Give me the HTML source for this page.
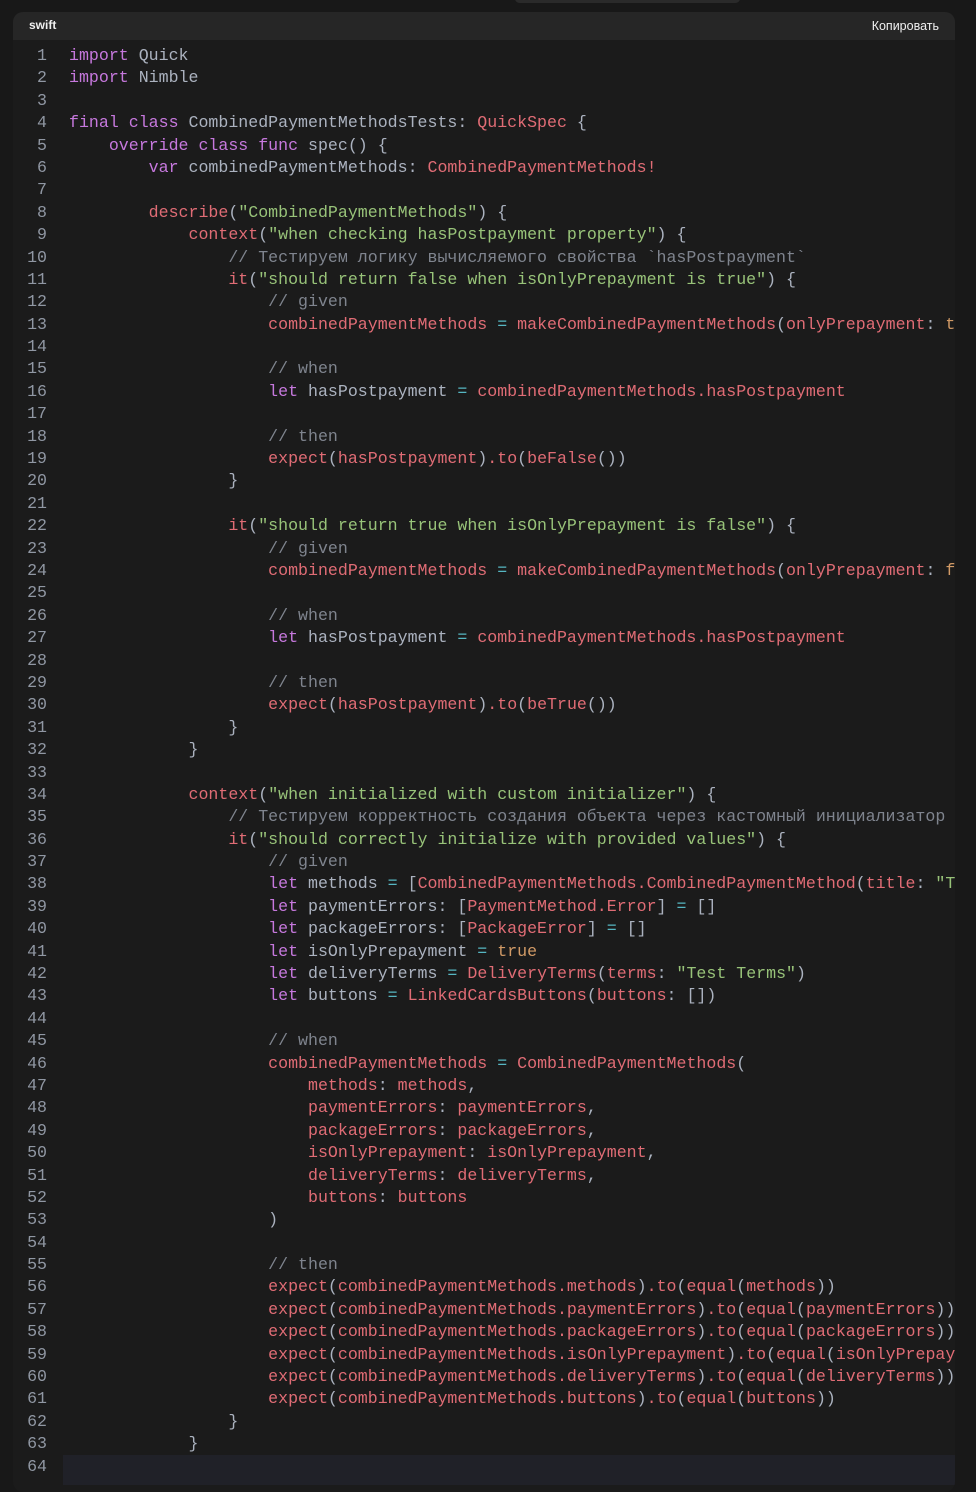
<!DOCTYPE html>
<html><head><meta charset="utf-8"><style>
html,body{margin:0;padding:0;background:#181818;width:976px;height:1472px;overflow:hidden}
.tab{position:absolute;left:515px;top:-6px;width:225px;height:9px;background:#2a2a2a;border-radius:5px}
.card{position:absolute;left:13px;top:12px;width:942px;height:1480px;background:#1b1b1b;border-radius:10px;overflow:hidden}
.hdr{height:28px;background:#262626;font-family:"Liberation Sans",sans-serif;font-size:12px;font-weight:bold;color:#f0f0f0;position:relative}
.hdr .hl1{position:absolute;left:16px;top:6px}
.hdr .hr1{position:absolute;right:16px;top:7px;font-weight:normal;font-size:12.5px;color:#f0f0f0}
pre{margin:0;position:absolute;top:33px;left:0;font-family:"Liberation Mono","DejaVu Sans Mono",monospace;font-size:16.6px;line-height:22.39px;color:#abb2bf;white-space:pre}
.ln{display:inline-block;width:34px;text-align:right;color:#9097a3;margin-right:22px}
.k{color:#c678dd}.r{color:#e06c75}.s{color:#98c379}.c{color:#7f848e}.o{color:#56b6c2}.n{color:#d19a66}
.hl{position:absolute;left:50px;top:1443px;width:900px;height:30px;background:#202128}
</style></head><body>
<div class="tab"></div>
<div class="card">
<div class="hdr"><span class="hl1">swift</span><span class="hr1">Копировать</span></div>
<div class="hl"></div>
<pre><span class="ln">1</span><span class="k">import</span> Quick
<span class="ln">2</span><span class="k">import</span> Nimble
<span class="ln">3</span>
<span class="ln">4</span><span class="k">final class</span> CombinedPaymentMethodsTests: <span class="r">QuickSpec</span> {
<span class="ln">5</span>    <span class="k">override class func</span> spec() {
<span class="ln">6</span>        <span class="k">var</span> combinedPaymentMethods: <span class="r">CombinedPaymentMethods!</span>
<span class="ln">7</span>
<span class="ln">8</span>        <span class="r">describe</span>(<span class="s">"CombinedPaymentMethods"</span>) {
<span class="ln">9</span>            <span class="r">context</span>(<span class="s">"when checking hasPostpayment property"</span>) {
<span class="ln">10</span>                <span class="c">// Тестируем логику вычисляемого свойства `hasPostpayment`</span>
<span class="ln">11</span>                <span class="r">it</span>(<span class="s">"should return false when isOnlyPrepayment is true"</span>) {
<span class="ln">12</span>                    <span class="c">// given</span>
<span class="ln">13</span>                    <span class="r">combinedPaymentMethods</span> <span class="o">=</span> <span class="r">makeCombinedPaymentMethods</span>(<span class="r">onlyPrepayment</span>: <span class="n">true</span>)
<span class="ln">14</span>
<span class="ln">15</span>                    <span class="c">// when</span>
<span class="ln">16</span>                    <span class="k">let</span> hasPostpayment <span class="o">=</span> <span class="r">combinedPaymentMethods.hasPostpayment</span>
<span class="ln">17</span>
<span class="ln">18</span>                    <span class="c">// then</span>
<span class="ln">19</span>                    <span class="r">expect</span>(<span class="r">hasPostpayment</span>)<span class="r">.to</span>(<span class="r">beFalse</span>())
<span class="ln">20</span>                }
<span class="ln">21</span>
<span class="ln">22</span>                <span class="r">it</span>(<span class="s">"should return true when isOnlyPrepayment is false"</span>) {
<span class="ln">23</span>                    <span class="c">// given</span>
<span class="ln">24</span>                    <span class="r">combinedPaymentMethods</span> <span class="o">=</span> <span class="r">makeCombinedPaymentMethods</span>(<span class="r">onlyPrepayment</span>: <span class="n">false</span>)
<span class="ln">25</span>
<span class="ln">26</span>                    <span class="c">// when</span>
<span class="ln">27</span>                    <span class="k">let</span> hasPostpayment <span class="o">=</span> <span class="r">combinedPaymentMethods.hasPostpayment</span>
<span class="ln">28</span>
<span class="ln">29</span>                    <span class="c">// then</span>
<span class="ln">30</span>                    <span class="r">expect</span>(<span class="r">hasPostpayment</span>)<span class="r">.to</span>(<span class="r">beTrue</span>())
<span class="ln">31</span>                }
<span class="ln">32</span>            }
<span class="ln">33</span>
<span class="ln">34</span>            <span class="r">context</span>(<span class="s">"when initialized with custom initializer"</span>) {
<span class="ln">35</span>                <span class="c">// Тестируем корректность создания объекта через кастомный инициализатор</span>
<span class="ln">36</span>                <span class="r">it</span>(<span class="s">"should correctly initialize with provided values"</span>) {
<span class="ln">37</span>                    <span class="c">// given</span>
<span class="ln">38</span>                    <span class="k">let</span> methods <span class="o">=</span> [<span class="r">CombinedPaymentMethods.CombinedPaymentMethod</span>(<span class="r">title</span>: <span class="s">"Test"</span>)]
<span class="ln">39</span>                    <span class="k">let</span> paymentErrors: [<span class="r">PaymentMethod.Error</span>] <span class="o">=</span> []
<span class="ln">40</span>                    <span class="k">let</span> packageErrors: [<span class="r">PackageError</span>] <span class="o">=</span> []
<span class="ln">41</span>                    <span class="k">let</span> isOnlyPrepayment <span class="o">=</span> <span class="n">true</span>
<span class="ln">42</span>                    <span class="k">let</span> deliveryTerms <span class="o">=</span> <span class="r">DeliveryTerms</span>(<span class="r">terms</span>: <span class="s">"Test Terms"</span>)
<span class="ln">43</span>                    <span class="k">let</span> buttons <span class="o">=</span> <span class="r">LinkedCardsButtons</span>(<span class="r">buttons</span>: [])
<span class="ln">44</span>
<span class="ln">45</span>                    <span class="c">// when</span>
<span class="ln">46</span>                    <span class="r">combinedPaymentMethods</span> <span class="o">=</span> <span class="r">CombinedPaymentMethods</span>(
<span class="ln">47</span>                        <span class="r">methods</span>: <span class="r">methods</span>,
<span class="ln">48</span>                        <span class="r">paymentErrors</span>: <span class="r">paymentErrors</span>,
<span class="ln">49</span>                        <span class="r">packageErrors</span>: <span class="r">packageErrors</span>,
<span class="ln">50</span>                        <span class="r">isOnlyPrepayment</span>: <span class="r">isOnlyPrepayment</span>,
<span class="ln">51</span>                        <span class="r">deliveryTerms</span>: <span class="r">deliveryTerms</span>,
<span class="ln">52</span>                        <span class="r">buttons</span>: <span class="r">buttons</span>
<span class="ln">53</span>                    )
<span class="ln">54</span>
<span class="ln">55</span>                    <span class="c">// then</span>
<span class="ln">56</span>                    <span class="r">expect</span>(<span class="r">combinedPaymentMethods.methods</span>)<span class="r">.to</span>(<span class="r">equal</span>(<span class="r">methods</span>))
<span class="ln">57</span>                    <span class="r">expect</span>(<span class="r">combinedPaymentMethods.paymentErrors</span>)<span class="r">.to</span>(<span class="r">equal</span>(<span class="r">paymentErrors</span>))
<span class="ln">58</span>                    <span class="r">expect</span>(<span class="r">combinedPaymentMethods.packageErrors</span>)<span class="r">.to</span>(<span class="r">equal</span>(<span class="r">packageErrors</span>))
<span class="ln">59</span>                    <span class="r">expect</span>(<span class="r">combinedPaymentMethods.isOnlyPrepayment</span>)<span class="r">.to</span>(<span class="r">equal</span>(<span class="r">isOnlyPrepayment</span>))
<span class="ln">60</span>                    <span class="r">expect</span>(<span class="r">combinedPaymentMethods.deliveryTerms</span>)<span class="r">.to</span>(<span class="r">equal</span>(<span class="r">deliveryTerms</span>))
<span class="ln">61</span>                    <span class="r">expect</span>(<span class="r">combinedPaymentMethods.buttons</span>)<span class="r">.to</span>(<span class="r">equal</span>(<span class="r">buttons</span>))
<span class="ln">62</span>                }
<span class="ln">63</span>            }
<span class="ln">64</span>
</pre>
</div>
</body></html>
